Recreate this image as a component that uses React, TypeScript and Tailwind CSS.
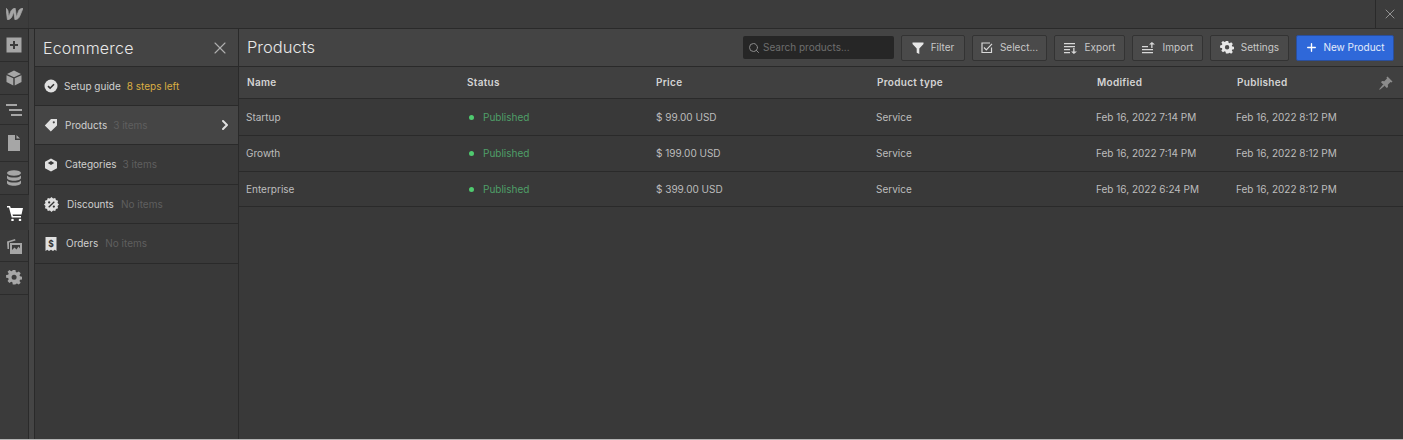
import { ChevronRight, Plus, Search, X } from "lucide-react"
import type { ReactNode } from "react"

const font = { fontFamily: "Inter, 'Liberation Sans', sans-serif" }

const PlusBox = () => (
  <svg viewBox="0 0 16 16" className="w-4 h-4">
    <path fillRule="evenodd" fill="#a6a6a6" d="M.5.5h15v15H.5zM7 4v3H4v2h3v3h2V9h3V7H9V4z" />
  </svg>
)
const Cube = () => (
  <svg viewBox="0 0 16 16" className="w-4 h-4" fill="#a6a6a6">
    <path d="M8 .5 15 4 8 7.2 1 4zM.5 5.2l6.8 3.1v7.2L.5 12zM15.500 5.200 8.700 8.300v7.200l6.800-3.500z" />
  </svg>
)
const Layers = () => (
  <svg viewBox="0 0 16 16" className="w-4 h-4" fill="#a6a6a6">
    <path d="M0 2h11v2H0zM3 7h13v2H3zM5 12h11v2H5z" />
  </svg>
)
const PageIcon = () => (
  <svg viewBox="0 0 16 16" className="w-4 h-4" fill="#a6a6a6">
    <path d="M2 0h7v5h5v11H2zM10.500 0 14 3.500h-3.500z" />
  </svg>
)
const Database = () => (
  <svg viewBox="0 0 16 16" className="w-4 h-4" fill="#a6a6a6">
    <ellipse cx="8" cy="3" rx="7" ry="2.800" />
    <path d="M1 5.400C2.500 7 5 7.500 8 7.500s5.500-.5 7-2.100V8c0 1.600-3 2.800-7 2.800S1 9.600 1 8zM1 10.400C2.500 12 5 12.500 8 12.500s5.500-.5 7-2.100V13c0 1.600-3 2.800-7 2.800S1 14.600 1 13z" />
  </svg>
)
const Cart = () => (
  <svg viewBox="0 0 16 16" className="w-4 h-4" fill="#fff">
    <path d="M0 1h3l.8 2H16l-1.500 6.500H5.500L6 11h8v1.500H4.700L2 2.500H0z" />
    <circle cx="5.500" cy="15" r="1.300" />
    <circle cx="13" cy="15" r="1.300" />
  </svg>
)
const Gallery = () => (
  <svg viewBox="0 0 16 16" className="w-4 h-4" fill="#a6a6a6">
    <path d="M1 3.500 9 1l.5 1.500L3 4.500V11H1.500z" />
    <path fillRule="evenodd" d="M4 5h12v11H4zM6 7v5l2.500-2.500 2 2 2-3 1.500 2V7z" />
  </svg>
)
const Gear = ({ color = "#a6a6a6", size = "w-4 h-4" }: { color?: string; size?: string }) => (
  <svg viewBox="0 0 16 16" className={size}>
    <path
      fill={color}
      fillRule="evenodd"
      d="M6.500 0h3l.4 2.300 1.300.6 2-1.300 2.100 2.100-1.300 2 .6 1.300 2.300.4v3l-2.300.4-.6 1.300 1.300 2-2.100 2.100-2-1.300-1.300.6L9.500 16h-3l-.4-2.300-1.300-.6-2 1.300L.7 12.300l1.300-2-.6-1.300L-.9 8.600v-3l2.300-.4.6-1.300-1.300-2L2.800 0l2 1.300 1.300-.6zM8 5.200a2.800 2.800 0 1 0 0 5.600 2.800 2.800 0 0 0 0-5.600z"
      transform="translate(.9 0) scale(.9)"
    />
  </svg>
)
const CheckBadge = () => (
  <svg viewBox="0 0 14 14" className="w-[14px] h-[14px]">
    <circle cx="7" cy="7" r="6.500" fill="#e0e0e0" />
    <path d="M4 7.200 6.100 9.200 10 5.200" fill="none" stroke="#333" strokeWidth="1.600" />
  </svg>
)
const Tag = () => (
  <svg viewBox="0 0 14 14" className="w-[14px] h-[14px]">
    <path fillRule="evenodd" fill="#e0e0e0" d="M13 1v6.500L6.800 13.500 .8 7.500 7 1zM9.800 3.200a1.100 1.100 0 1 0 0 2.200 1.100 1.100 0 0 0 0-2.200z" />
  </svg>
)
const Box = () => (
  <svg viewBox="0 0 14 14" className="w-[14px] h-[14px]">
    <path fillRule="evenodd" fill="#e0e0e0" d="M7 .5 13 3.700v6.600L7 13.500 1 10.300V3.700zM7 3 3.800 5 7 7l3.200-2z" />
  </svg>
)
const DiscountBadge = () => (
  <svg viewBox="0 0 16 16" className="w-[15px] h-[15px]">
    <path fill="#e0e0e0" d="m8 0 1.700 1.600L12 1l.7 2.300 2.300.7-.6 2.300L16 8l-1.600 1.700.6 2.300-2.300.7L12 15l-2.300-.6L8 16l-1.700-1.600L4 15l-.7-2.300L1 12l.6-2.300L0 8l1.600-1.700L1 4l2.300-.7L4 1l2.300.6z" />
    <path d="M5 11l6-6" stroke="#333" strokeWidth="1.400" />
    <circle cx="5.500" cy="5.800" r="1.200" fill="#333" />
    <circle cx="10.500" cy="10.200" r="1.200" fill="#333" />
  </svg>
)
const Receipt = () => (
  <svg viewBox="0 0 14 14" className="w-[14px] h-[14px]">
    <path fill="#e0e0e0" d="M1.500 0h11v14l-1.800-1.300L9 14l-2-1.300L5 14l-1.700-1.300L1.500 14z" />
    <text x="7" y="9.800" textAnchor="middle" fontSize="8.500" fontWeight="700" fill="#333" style={font}>$</text>
  </svg>
)
const Funnel = () => (
  <svg viewBox="0 0 12 12" className="w-3 h-3">
    <path fill="#e6e6e6" d="M.5.500h11v1.500L7.300 6.500V12l-2.600-1.300V6.500L.5 2z" />
  </svg>
)
const SelectIcon = () => (
  <svg viewBox="0 0 12 12" className="w-3 h-3" fill="none" stroke="#d9d9d9" strokeWidth="1.200">
    <path d="M10.500 5.500v5h-9.500v-9.500h8" />
    <path d="M3 5.500l2.300 2.300L11 1.800" />
  </svg>
)
const ExportIcon = () => (
  <svg viewBox="0 0 14 12" className="w-[14px] h-3" fill="#d9d9d9">
    <path d="M0 1h11v1.200H0zM0 4h11v1.200H0zM0 7h6v1.200H0zM0 10h6v1.200H0zM9.200 6h1.300v3.500H13L9.900 12 7 9.500h2.200z" />
  </svg>
)
const ImportIcon = () => (
  <svg viewBox="0 0 14 12" className="w-[14px] h-3" fill="#d9d9d9">
    <path d="M0 4h6v1.200H0zM0 7h11v1.200H0zM0 10h11v1.200H0zM9.200 6V2.500H7L9.900 0 13 2.500h-2.500V6z" />
  </svg>
)
const PinIcon = () => (
  <svg viewBox="0 0 14 14" className="w-[14px] h-[14px]" fill="#8c8c8c">
    <path d="M8.500.5 13.500 5.500 12.400 6.500 11.500 6 8.800 8.700 9 11 7.800 12 2 6.200 3 5l2.300.2L8 2.500 7.500 1.600z" />
    <path d="M4.300 8.300 5.700 9.700.8 13.800.2 13.200z" />
  </svg>
)

const railItems = [
  { icon: <PlusBox />, h: "h-[33px]" },
  { icon: <Cube />, h: "h-[33px]" },
  { icon: <Layers />, h: "h-[30px]" },
  { icon: <PageIcon />, h: "h-[37px]" },
  { icon: <Database />, h: "h-[33px]" },
  { icon: <Cart />, h: "h-[35px]", active: true },
  { icon: <Gallery />, h: "h-[32px]" },
  { icon: <Gear />, h: "h-[33px]" },
]

const menu = [
  { icon: <Tag />, label: "Products", note: "3 items", h: "h-[39px]", active: true, gap: "gap-[7px]" },
  { icon: <Box />, label: "Categories", note: "3 items", h: "h-[40px]", gap: "gap-[7px]" },
  { icon: <DiscountBadge />, label: "Discounts", note: "No items", h: "h-[39px]", gap: "gap-[8px]" },
  { icon: <Receipt />, label: "Orders", note: "No items", h: "h-[40px]", gap: "gap-[8px]" },
]

const products = [
  { name: "Startup", price: "$ 99.00 USD", modified: "Feb 16, 2022 7:14 PM", h: "h-[37px]" },
  { name: "Growth", price: "$ 199.00 USD", modified: "Feb 16, 2022 7:14 PM", h: "h-[36px]" },
  { name: "Enterprise", price: "$ 399.00 USD", modified: "Feb 16, 2022 6:24 PM", h: "h-[35px]" },
]

function ToolButton({ icon, label, w }: { icon: ReactNode; label: string; w: string }) {
  return (
    <button className={`${w} h-[26px] flex items-center justify-center gap-[7px] rounded-[2px] bg-[#4a4a4a] border border-[#333] text-[10px] text-[#c8c8c8]`}>
      {icon}
      {label}
    </button>
  )
}

export default function App() {
  return (
    <div style={font} className="w-[1403px] h-[440px] flex flex-col overflow-hidden bg-[#393939] text-[#d0d0d0] border-b border-[#b4b4b4]">
      {/* top bar */}
      <div className="h-[29px] shrink-0 flex bg-[#3c3c3c] border-b border-[#2a2a2a]">
        <div className="w-[29px] flex items-center justify-center border-r border-[#363636]">
          <svg viewBox="0 0 18 12" className="w-[17px] h-[12px]">
            <path fill="#a6a6a6" d="M13 3.500s-1.800 5.400-2 5.900C11 8.900 9.800 0 9.800 0 7 0 5.500 2 4.800 4c0 0-1.900 5-2 5.400C2.700 8.900 2.300 3.600 2.300 3.600 2.100 1 0 0 0 0l1.500 12c2.800 0 4.300-2 5.100-4l1.600-4.400c.1.500 1.200 8.400 1.200 8.400 2.900 0 4.400-1.800 5.200-3.800L18 0c-3 0-4.600 2-5 3.500z" stroke="#a6a6a6" strokeWidth="0.800" />
          </svg>
        </div>
        <div className="flex-1" />
        <div className="w-[28px] flex items-center justify-center border-l border-[#2a2a2a]">
          <X className="w-4 h-4 text-[#a0a0a0]" strokeWidth={1.300} />
        </div>
      </div>

      <div className="flex-1 flex min-h-0">
        {/* icon rail */}
        <div className="w-[29px] shrink-0 flex flex-col bg-[#3b3b3b] border-r border-[#2a2a2a]">
          {railItems.map((item, i) => (
            <div
              key={i}
              className={`${item.h} flex items-center justify-center border-b border-[#2c2c2c] ${item.active ? "bg-[#383838] w-[29px] border-b-0" : ""}`}
            >
              {item.icon}
            </div>
          ))}
        </div>
        <div className="w-[6px] shrink-0 bg-[#454545] border-r border-[#2a2a2a]" />

        {/* ecommerce panel */}
        <div className="w-[204px] shrink-0 flex flex-col border-r border-[#2a2a2a]">
          <div className="h-[38px] shrink-0 flex items-center justify-between pl-[8px] pr-[8px] bg-[#444] border-b border-[#2a2a2a]">
            <span className="text-[16px] font-light tracking-[0.2px] text-[#e8e8e8]">Ecommerce</span>
            <X className="w-5 h-5 text-[#b0b0b0]" strokeWidth={1.300} />
          </div>
          <div className="h-[39px] shrink-0 flex items-center gap-[7px] pl-[9px] border-b border-[#2a2a2a] text-[10px]">
            <CheckBadge />
            <span className="-ml-[1px]">Setup guide</span>
            <span className="-ml-[1px] text-[#d9ae43]">8 steps left</span>
          </div>
          {menu.map((m) => (
            <div
              key={m.label}
              className={`${m.h} shrink-0 flex items-center ${m.gap} pl-[9px] pr-[5px] border-b border-[#2a2a2a] text-[10px] ${m.active ? "bg-[#454545]" : ""}`}
            >
              {m.icon}
              <span className="text-[#d0d0d0]">{m.label}</span>
              <span className="-ml-[1px] text-[#5f5f5f]">{m.note}</span>
              {m.active && <ChevronRight className="ml-auto w-4 h-4 text-[#e0e0e0]" strokeWidth={3} />}
            </div>
          ))}
        </div>

        {/* products */}
        <div className="flex-1 min-w-0 flex flex-col">
          <div className="h-[38px] shrink-0 flex items-center pl-[8px] pr-[9px] bg-[#444] border-b border-[#2a2a2a]">
            <span className="text-[16.500px] font-light text-[#e8e8e8]">Products</span>
            <div className="ml-auto flex items-center gap-[7px]">
              <div className="w-[151px] h-[23px] flex items-center gap-[3px] pl-[5px] rounded-[2px] bg-[#262626] text-[10px] text-[#6e6e6e]">
                <Search className="w-[12px] h-[12px] text-[#8a8a8a]" strokeWidth={2} />
                Search products...
              </div>
              <ToolButton w="w-[64px]" icon={<Funnel />} label="Filter" />
              <ToolButton w="w-[75px]" icon={<SelectIcon />} label="Select..." />
              <ToolButton w="w-[71px]" icon={<ExportIcon />} label="Export" />
              <ToolButton w="w-[71px]" icon={<ImportIcon />} label="Import" />
              <ToolButton w="w-[79px]" icon={<Gear color="#e6e6e6" size="w-[14px] h-[14px]" />} label="Settings" />
              <button className="w-[98px] h-[26px] flex items-center justify-center gap-[5px] rounded-[2px] bg-[#2f68d9] border border-[#2a4f9c] text-[10px] text-[#e4ecfb]">
                <Plus className="w-[13px] h-[13px] text-white" strokeWidth={2.500} />
                New Product
              </button>
            </div>
          </div>

          <div className="h-[32px] shrink-0 grid grid-cols-[220px_189px_221px_220px_140px_1fr] items-center pl-[8px] bg-[#404040] border-b border-[#2a2a2a] text-[10px] font-semibold tracking-[0.3px] text-[#d4d4d4]">
            <span>Name</span>
            <span>Status</span>
            <span>Price</span>
            <span>Product type</span>
            <span>Modified</span>
            <div className="flex items-center justify-between pr-[10px]">
              <span>Published</span>
              <PinIcon />
            </div>
          </div>

          {products.map((p) => (
            <div
              key={p.name}
              className={`${p.h} shrink-0 grid grid-cols-[221px_189px_220px_220px_140px_1fr] items-center pl-[7px] border-b border-[#2a2a2a] text-[10px] text-[#bdbdbd]`}
            >
              <span>{p.name}</span>
              <span className="flex items-center gap-[9px] text-[#4f9f68]">
                <span className="w-[5px] h-[5px] ml-[2px] rounded-full bg-[#4fca6f]" />
                Published
              </span>
              <span>{p.price}</span>
              <span>Service</span>
              <span>{p.modified}</span>
              <span>Feb 16, 2022 8:12 PM</span>
            </div>
          ))}
        </div>
      </div>
    </div>
  )
}
